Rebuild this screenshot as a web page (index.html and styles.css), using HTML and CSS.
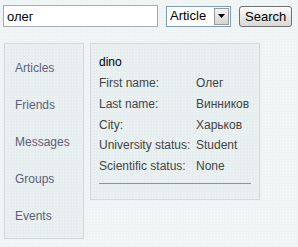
FILE: index.html
```html
<!DOCTYPE html>
<html lang="en">
<head>
  <meta charset="UTF-8" />
  <title>Search</title>
  <link rel="stylesheet" href="styles.css">
</head>
<body>

  <form class="search-bar" autocomplete="off">
    <input type="text" class="search-input" value="олег" />
    <div class="select">
      <span class="select-value">Article</span>
      <span class="select-arrow">
        <svg width="7" height="4" viewBox="0 0 7 4"><path d="M0 0h7L3.5 4z" fill="#000"/></svg>
      </span>
    </div>
    <button type="button" class="search-btn">Search</button>
  </form>

  <div class="main">
    <ul class="sidebar">
      <li><a href="#">Articles</a></li>
      <li><a href="#">Friends</a></li>
      <li><a href="#">Messages</a></li>
      <li><a href="#">Groups</a></li>
      <li><a href="#">Events</a></li>
    </ul>

    <div class="result">
      <div class="nick">dino</div>
      <table class="info">
        <tr><td>First name:</td><td>Олег</td></tr>
        <tr><td>Last name:</td><td>Винников</td></tr>
        <tr><td>City:</td><td>Харьков</td></tr>
        <tr><td>University status:</td><td>Student</td></tr>
        <tr><td>Scientific status:</td><td>None</td></tr>
      </table>
      <hr class="sep" />
    </div>
  </div>

</body>
</html>
```

FILE: styles.css
```css
* {
  box-sizing: border-box;
}
body {
  margin: 0;
  font-family: 'Liberation Sans', Arial, sans-serif;
  font-size: 12px;
  line-height: 14px;
  color: #333;
  background-color: #eef3f4;
  background-image: radial-gradient(#f8fbfb 0.6px, transparent 0.8px);
  background-size: 3px 3px;
  height: 100vh;
}
/* Search bar */
.search-bar {
  display: flex;
  align-items: center;
  padding: 5px 0 0 3px;
  height: 27px;
}
.search-input {
  width: 155px;
  height: 22px;
  margin: 0;
  padding: 1px 3px;
  border: 1px solid #a5acb2;
  background: #fff;
  font-family: 'Liberation Sans', Arial, sans-serif;
  font-size: 13px;
  color: #000;
  outline: none;
}
.select {
  display: flex;
  align-items: center;
  margin-left: 8px;
  width: 65px;
  height: 21px;
  border: 1px solid #7f9db9;
  background: #fff;
  padding: 1px;
  font-size: 13px;
  color: #000;
}
.select-value {
  flex: 1;
  padding-left: 2px;
}
.select-arrow {
  width: 15px;
  height: 17px;
  display: flex;
  align-items: center;
  justify-content: center;
  background: linear-gradient(#f4f4f4, #d4d4d4);
  border: 1px solid #9a9a9a;
}
.search-btn {
  margin-left: 8px;
  height: 21px;
  padding: 0 5px;
  border: 1px solid #707070;
  border-radius: 3px;
  background: linear-gradient(#fdfdfd, #e6e6e6 60%, #d8d8d8);
  font-family: 'Liberation Sans', Arial, sans-serif;
  font-size: 13px;
  color: #000;
}
/* Main area */
.main {
  display: flex;
  align-items: flex-start;
  padding: 16px 0 0 4px;
  gap: 6px;
}
.sidebar {
  list-style: none;
  margin: 0;
  padding: 17px 0 0 0;
  width: 80px;
  height: 196px;
  border: 1px solid #d3dadc;
  background-color: #e6eef0;
  background-image: radial-gradient(#f2f7f7 0.6px, transparent 0.8px);
  background-size: 3px 3px;
}
.sidebar li {
  height: 37px;
  padding-left: 10px;
}
.sidebar a {
  color: #5e5e7a;
  text-decoration: none;
  font-size: 12px;
}
.result {
  width: 170px;
  padding: 11px 8px 15px 8px;
  border: 1px solid #d3dadc;
  background-color: #e6eef0;
  background-image: radial-gradient(#f2f7f7 0.6px, transparent 0.8px);
  background-size: 3px 3px;
}
.nick {
  color: #000;
  margin-bottom: 7px;
}
.info {
  border-collapse: collapse;
}
.info td {
  padding: 0 0 6.75px 0;
  color: #444;
  white-space: nowrap;
  vertical-align: top;
}
.info td:first-child {
  width: 97px;
}
.sep {
  margin: 3px 0 0 0;
  border: none;
  border-top: 1px solid #8f9496;
}
```
